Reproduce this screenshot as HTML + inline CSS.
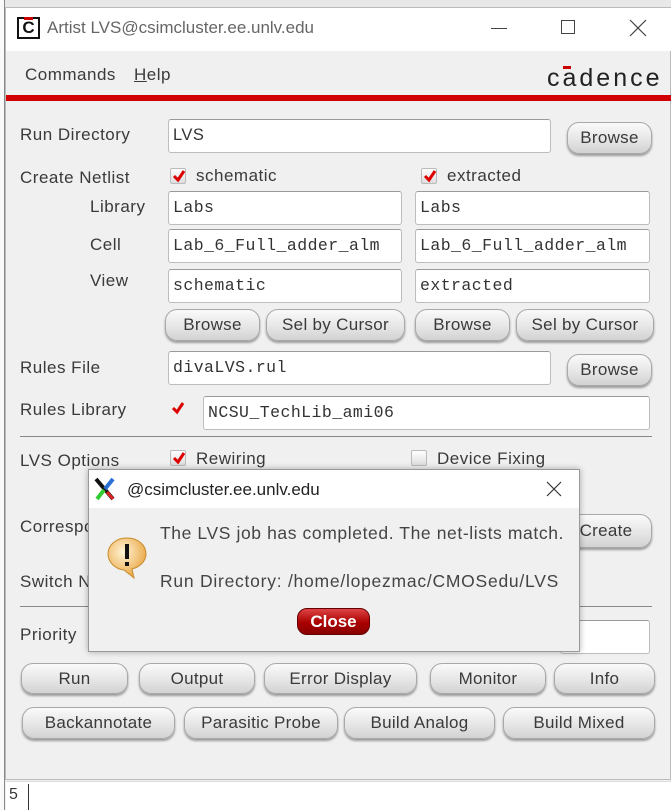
<!DOCTYPE html>
<html><head><meta charset="utf-8"><style>
*{box-sizing:border-box;margin:0;padding:0}
body{width:671px;height:810px;overflow:hidden;background:#f0f0f0;font-family:"Liberation Sans",sans-serif;color:#333;position:relative}
.a{position:absolute}
.lbl{position:absolute;font-size:17px;color:#3a3a3a;white-space:nowrap;letter-spacing:0.5px}
.in{position:absolute;background:#fff;border:1px solid #bdbdbd;border-top-color:#9a9a9a;border-radius:3px;font-family:"Liberation Mono",monospace;font-size:16.5px;letter-spacing:0.45px;color:#333;padding:6px 0 0 4px;white-space:nowrap}
.btn{position:absolute;border:1px solid #a8a8a8;border-radius:12px;background:linear-gradient(#fafafa,#e4e4e4 60%,#d2d2d2);box-shadow:0 2px 2px #9a9a9a;font-size:17px;color:#3a3a3a;text-align:center;white-space:nowrap;letter-spacing:0.3px}
.cb{position:absolute;width:16px;height:16px;border:1px solid #bbb;border-radius:2px;background:linear-gradient(#fff,#ddd)}
.cb svg{position:absolute;left:1px;top:0}
</style></head><body>
<div class="a" style="left:0;top:0;width:671px;height:8px;background:#e8e8e8"></div>
<div class="a" style="left:0;top:0;width:5px;height:810px;background:#fafafa;border-right:1px solid #888"></div>
<div class="a" style="left:5px;top:7px;width:666px;height:773px;background:#f0f0f0;border:1px solid #bbb"></div>
<div class="a" style="left:6px;top:8px;width:665px;height:43px;background:#fff"></div>
<div class="a" style="left:17px;top:17px;width:23px;height:22px;border:2px solid #111;background:#fff;font:bold 17px 'Liberation Sans';text-align:center;line-height:18px;color:#111">C<div class="a" style="left:5px;top:-2px;width:9px;height:3px;background:#c00"></div></div>
<div class="lbl" style="left:47px;top:18px;font-size:17px;color:#666;letter-spacing:0">Artist LVS@csimcluster.ee.unlv.edu</div>
<div class="a" style="left:491px;top:28px;width:16px;height:1px;background:#444"></div>
<div class="a" style="left:561px;top:20px;width:14px;height:14px;border:1px solid #444"></div>
<svg class="a" style="left:629px;top:19px" width="18" height="18"><path d="M1 1L17 17M17 1L1 17" stroke="#444" stroke-width="1.2"/></svg>
<div class="lbl" style="left:25px;top:65px">Commands</div>
<div class="lbl" style="left:134px;top:65px"><u>H</u>elp</div>
<div class="lbl" style="left:547px;top:64px;font-size:25px;letter-spacing:3px;color:#222">cadence</div>
<div class="a" style="left:563px;top:66px;width:8px;height:3px;background:#c00"></div>
<div class="a" style="left:6px;top:95px;width:665px;height:6px;background:#d00000"></div>

<div class="lbl" style="left:20px;top:125px">Run Directory</div>
<div class="in" style="left:168px;top:119px;width:383px;height:34px;font-family:'Liberation Sans';">LVS</div>
<div class="btn" style="left:567px;top:122px;width:85px;height:32px;line-height:30px">Browse</div>

<div class="lbl" style="left:20px;top:168px">Create Netlist</div>
<div class="cb" style="left:170px;top:168px"><svg width="14" height="14"><path d="M2 7L6 11L12 2" stroke="#d00" stroke-width="3" fill="none"/></svg></div>
<div class="lbl" style="left:196px;top:166px">schematic</div>
<div class="cb" style="left:421px;top:168px"><svg width="14" height="14"><path d="M2 7L6 11L12 2" stroke="#d00" stroke-width="3" fill="none"/></svg></div>
<div class="lbl" style="left:447px;top:166px">extracted</div>

<div class="lbl" style="left:90px;top:197px">Library</div>
<div class="in" style="left:168px;top:191px;width:234px;height:34px">Labs</div>
<div class="in" style="left:415px;top:191px;width:235px;height:34px">Labs</div>
<div class="lbl" style="left:90px;top:235px">Cell</div>
<div class="in" style="left:168px;top:229px;width:234px;height:34px">Lab_6_Full_adder_alm</div>
<div class="in" style="left:415px;top:229px;width:235px;height:34px">Lab_6_Full_adder_alm</div>
<div class="lbl" style="left:90px;top:271px">View</div>
<div class="in" style="left:168px;top:269px;width:234px;height:34px">schematic</div>
<div class="in" style="left:415px;top:269px;width:235px;height:34px">extracted</div>

<div class="btn" style="left:165px;top:309px;width:95px;height:32px;line-height:30px">Browse</div>
<div class="btn" style="left:266px;top:309px;width:139px;height:32px;line-height:30px">Sel by Cursor</div>
<div class="btn" style="left:415px;top:309px;width:95px;height:32px;line-height:30px">Browse</div>
<div class="btn" style="left:516px;top:309px;width:138px;height:32px;line-height:30px">Sel by Cursor</div>

<div class="lbl" style="left:20px;top:358px">Rules File</div>
<div class="in" style="left:168px;top:351px;width:383px;height:34px">divaLVS.rul</div>
<div class="btn" style="left:567px;top:354px;width:85px;height:32px;line-height:30px">Browse</div>

<div class="lbl" style="left:20px;top:400px">Rules Library</div>
<div class="cb" style="left:170px;top:401px;border:none;background:none"><svg width="14" height="14"><path d="M2 7L6 11L12 2" stroke="#d00" stroke-width="3" fill="none"/></svg></div>
<div class="in" style="left:203px;top:396px;width:447px;height:34px">NCSU_TechLib_ami06</div>
<div class="a" style="left:20px;top:436px;width:632px;height:1px;background:#888"></div>

<div class="lbl" style="left:20px;top:451px">LVS Options</div>
<div class="cb" style="left:170px;top:450px"><svg width="14" height="14"><path d="M2 7L6 11L12 2" stroke="#d00" stroke-width="3" fill="none"/></svg></div>
<div class="lbl" style="left:196px;top:449px">Rewiring</div>
<div class="cb" style="left:411px;top:450px"></div>
<div class="lbl" style="left:437px;top:449px">Device Fixing</div>

<div class="lbl" style="left:20px;top:517px">Correspondence</div>
<div class="btn" style="left:560px;top:514px;width:92px;height:34px;line-height:32px">Create</div>
<div class="lbl" style="left:20px;top:572px">Switch Names</div>
<div class="a" style="left:20px;top:606px;width:632px;height:1px;background:#888"></div>
<div class="lbl" style="left:20px;top:625px">Priority</div>
<div class="in" style="left:560px;top:620px;width:90px;height:34px"></div>

<div class="btn" style="left:21px;top:663px;width:107px;height:31px;line-height:29px">Run</div>
<div class="btn" style="left:139px;top:663px;width:116px;height:31px;line-height:29px">Output</div>
<div class="btn" style="left:264px;top:663px;width:153px;height:31px;line-height:29px">Error Display</div>
<div class="btn" style="left:430px;top:663px;width:116px;height:31px;line-height:29px">Monitor</div>
<div class="btn" style="left:554px;top:663px;width:101px;height:31px;line-height:29px">Info</div>
<div class="btn" style="left:22px;top:707px;width:153px;height:32px;line-height:30px">Backannotate</div>
<div class="btn" style="left:184px;top:707px;width:154px;height:32px;line-height:30px">Parasitic Probe</div>
<div class="btn" style="left:344px;top:707px;width:151px;height:32px;line-height:30px">Build Analog</div>
<div class="btn" style="left:503px;top:707px;width:152px;height:32px;line-height:30px">Build Mixed</div>

<div class="a" style="left:6px;top:781px;width:665px;height:29px;background:#fff;border-top:1px solid #ddd"></div>
<div class="lbl" style="left:9px;top:786px;font-size:16px">5</div>
<div class="a" style="left:28px;top:784px;width:1px;height:26px;background:#333"></div>

<div class="a" style="left:88px;top:469px;width:492px;height:183px;background:#f0f0f0;border:1px solid #999;box-shadow:0 0 6px rgba(0,0,0,.3)"></div>
<div class="a" style="left:89px;top:470px;width:490px;height:38px;background:#fff"></div>
<svg class="a" style="left:93px;top:477px" width="24" height="24"><path d="M3 2L20 22" stroke="#111" stroke-width="4"/><path d="M20 2L12 12" stroke="#2a6fd6" stroke-width="4"/><path d="M11 13L4 22" stroke="#3c3" stroke-width="4"/><path d="M14 15L20 22" stroke="#d22" stroke-width="3"/></svg>
<div class="lbl" style="left:127px;top:480px;font-size:17px;color:#222;letter-spacing:0">@csimcluster.ee.unlv.edu</div>
<svg class="a" style="left:546px;top:481px" width="16" height="16"><path d="M1 1L15 15M15 1L1 15" stroke="#333" stroke-width="1.2"/></svg>
<svg class="a" style="left:106px;top:536px" width="42" height="44"><defs><radialGradient id="g" cx=".4" cy=".35" r=".7"><stop offset="0" stop-color="#fff3d6"/><stop offset="1" stop-color="#e8a23a"/></radialGradient></defs><path d="M21 2C10 2 2 9 2 18C2 26 9 33 18 34L28 42L26 33C34 31 40 25 40 18C40 9 32 2 21 2Z" fill="url(#g)" stroke="#c88a2a"/><rect x="19" y="8" width="4" height="15" fill="#111"/><rect x="19" y="26" width="4" height="4" fill="#111"/></svg>
<div class="lbl" style="left:160px;top:523px;font-size:17.5px;color:#444;letter-spacing:0.6px">The LVS job has completed. The net-lists match.</div>
<div class="lbl" style="left:160px;top:571px;font-size:17.5px;color:#444;letter-spacing:0.75px">Run Directory: /home/lopezmac/CMOSedu/LVS</div>
<div class="a" style="left:297px;top:608px;width:73px;height:27px;border-radius:10px;background:linear-gradient(#d44,#a00 55%,#800);border:1px solid #600;color:#fff;font:bold 17px 'Liberation Sans';text-align:center;line-height:25px">Close</div>
</body></html>
